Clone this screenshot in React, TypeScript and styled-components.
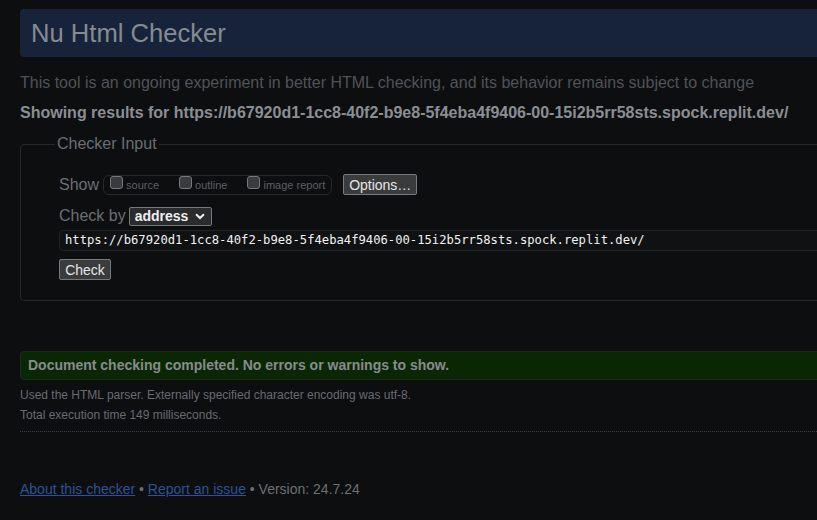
import React from "react";
import styled, { createGlobalStyle } from "styled-components";

const GlobalStyle = createGlobalStyle`
  html, body {
    margin: 0;
    padding: 0;
    background: #0d0e10;
    overflow: hidden;
  }
  body {
    font-family: "Liberation Sans", Arial, sans-serif;
    color: #8a8d91;
  }
`;

const Page = styled.div`
  padding: 9px 0 0 20px;
  margin-right: -40px;
`;

const Header = styled.h1`
  margin: 0;
  height: 48px;
  line-height: 48px;
  padding-left: 11px;
  background: #16233a;
  border-radius: 4px;
  font-size: 25.6px;
  font-weight: normal;
  color: #858b92;
`;

const Intro = styled.p`
  margin: 16px 0 0;
  font-size: 16px;
  line-height: 20px;
  color: #4f5357;
`;

const Results = styled.p`
  margin: 10px 0 0;
  font-size: 16px;
  line-height: 20px;
  font-weight: bold;
  color: #8b8e93;
`;

const Fieldset = styled.fieldset`
  margin: 11px 0 0;
  padding: 0 0 20px 38px;
  border: 1px solid #26282b;
  border-radius: 4px;
  min-inline-size: 0;
`;

const Legend = styled.legend`
  margin-left: -4px;
  padding: 0 2px;
  font-size: 16px;
  line-height: 20px;
  color: #6a6e73;
`;

const Row = styled.div<{ $top: number }>`
  display: flex;
  align-items: center;
  margin-top: ${(p) => p.$top}px;
`;

const Label = styled.span`
  font-size: 16px;
  line-height: 20px;
  color: #6a6e73;
`;

const Group = styled.div`
  display: flex;
  align-items: center;
  gap: 20px;
  height: 18px;
  margin-left: 4px;
  padding: 0 6px;
  border: 1px solid #26282b;
  border-radius: 6px;
`;

const Choice = styled.label`
  display: flex;
  align-items: center;
  gap: 3px;
  font-size: 11px;
  color: #5c6065;
`;

const Box = styled.span`
  box-sizing: border-box;
  width: 13px;
  height: 13px;
  border: 1px solid #75787c;
  border-radius: 3px;
  background: #3a3b3d;
  margin-top: -4px;
`;

const Button = styled.button<{ $w: number }>`
  width: ${(p) => p.$w}px;
  height: 21px;
  padding: 0;
  background: #3a3b3d;
  border: 1px solid #75787c;
  border-radius: 2px;
  font-family: "Liberation Sans", Arial, sans-serif;
  font-size: 14px;
  color: #e6e6e6;
`;

const OptionsButton = styled(Button)`
  margin-left: 11px;
`;

const Select = styled.div`
  display: flex;
  align-items: center;
  justify-content: space-between;
  box-sizing: border-box;
  width: 83px;
  height: 19px;
  margin-left: 3px;
  padding: 0 6px 0 5px;
  background: #2a2b2d;
  border: 1px solid #75787c;
  border-radius: 2px;
  font-size: 14px;
  font-weight: bold;
  color: #f0f0f0;
`;

const UrlInput = styled.div`
  box-sizing: border-box;
  height: 21px;
  margin-top: 4px;
  padding: 0 5px;
  border: 1px solid #222427;
  border-radius: 4px 0 0 4px;
  background: #101113;
  font-family: "DejaVu Sans Mono", "Liberation Mono", monospace;
  font-size: 12.2px;
  line-height: 19px;
  color: #f2f2f2;
  white-space: nowrap;
`;

const Success = styled.div`
  margin-top: 50px;
  height: 27px;
  line-height: 27px;
  padding-left: 7px;
  background: #0a2703;
  border: 1px solid #1f2a1f;
  border-radius: 4px;
  font-size: 14px;
  font-weight: bold;
  color: #878b8e;
`;

const Detail = styled.p<{ $top: number }>`
  margin: ${(p) => p.$top}px 0 0;
  font-size: 12px;
  line-height: 20px;
  color: #676b70;
`;

const Rule = styled.hr`
  margin: 6px 0 0;
  border: 0;
  border-top: 1px dotted #3c3f43;
`;

const Footer = styled.p`
  margin: 47px 0 0;
  font-size: 14px;
  line-height: 20px;
  color: #6c7075;
`;

const Link = styled.a`
  color: #2b5398;
  text-decoration: underline;
`;

const Chevron = () => (
  <svg width="10" height="7" viewBox="0 0 10 7">
    <path d="M1 1.2 L5 5 L9 1.2" fill="none" stroke="#f0f0f0" strokeWidth="2" />
  </svg>
);

const url =
  "https://b67920d1-1cc8-40f2-b9e8-5f4eba4f9406-00-15i2b5rr58sts.spock.replit.dev/";

export default function App() {
  return (
    <>
      <GlobalStyle />
      <Page>
        <Header>Nu Html Checker</Header>
        <Intro>
          This tool is an ongoing experiment in better HTML checking, and its
          behavior remains subject to change
        </Intro>
        <Results>Showing results for {url}</Results>
        <Fieldset>
          <Legend>Checker Input</Legend>
          <Row $top={20}>
            <Label>Show</Label>
            <Group>
              <Choice>
                <Box />
                source
              </Choice>
              <Choice>
                <Box />
                outline
              </Choice>
              <Choice>
                <Box />
                image report
              </Choice>
            </Group>
            <OptionsButton $w={74}>Options…</OptionsButton>
          </Row>
          <Row $top={11}>
            <Label>Check by</Label>
            <Select>
              address
              <Chevron />
            </Select>
          </Row>
          <UrlInput>{url}</UrlInput>
          <Row $top={8}>
            <Button $w={52}>Check</Button>
          </Row>
        </Fieldset>
        <Success>
          Document checking completed. No errors or warnings to show.
        </Success>
        <Detail $top={5}>
          Used the HTML parser. Externally specified character encoding was
          utf-8.
        </Detail>
        <Detail $top={0}>Total execution time 149 milliseconds.</Detail>
        <Rule />
        <Footer>
          <Link href="#">About this checker</Link> •{" "}
          <Link href="#">Report an issue</Link> • Version: 24.7.24
        </Footer>
      </Page>
    </>
  );
}
